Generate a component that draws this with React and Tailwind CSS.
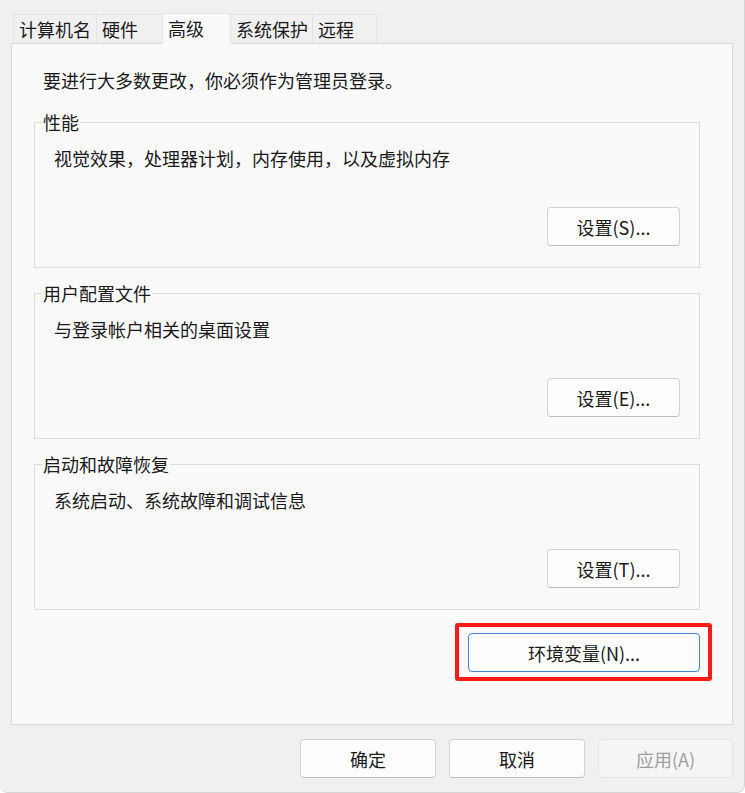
const tabs = [
  { label: "计算机名", w: "w-[84px]" },
  { label: "硬件", w: "w-[67px]" },
  { label: "高级", w: "w-[69px]", active: true },
  { label: "系统保护", w: "w-[83px]" },
  { label: "远程", w: "w-[65px]" },
];

const groups = [
  { title: "性能", desc: "视觉效果，处理器计划，内存使用，以及虚拟内存", btn: "设置(S)..." },
  { title: "用户配置文件", desc: "与登录帐户相关的桌面设置", btn: "设置(E)..." },
  { title: "启动和故障恢复", desc: "系统启动、系统故障和调试信息", btn: "设置(T)..." },
];

const Button = ({ children, className = "", disabled }) => (
  <button
    disabled={disabled}
    className={`h-[39px] rounded-[4px] border text-[18px] leading-[24px] ${
      disabled
        ? "bg-[#f5f5f5] border-[#e6e6e6] text-[#9e9e9e]"
        : "bg-[#fdfdfd] border-[#d2d2d2] border-b-[#bdbdbd] text-[#1a1a1a]"
    } ${className}`}
  >
    {children}
  </button>
);

export default function App() {
  return (
    <div
      className="w-[745px] h-[793px] bg-white"
      style={{ fontFamily: '"Noto Sans CJK SC", "Noto Sans", sans-serif' }}
    >
      <div className="w-full h-full bg-[#f0f0f0] rounded-b-[8px] border-r border-b border-[#d4d4d4] flex flex-col">
        {/* Tabs */}
        <div className="flex items-end pl-[13px] pt-[13px] h-[43px]">
          {tabs.map((t, i) => (
            <div
              key={t.label}
              className={`${t.w} ${i > 0 ? "-ml-px" : ""} border-t border-l border-r border-[#e3e3e3] pl-[5px] flex items-center text-[18px] leading-[24px] text-[#1a1a1a] ${
                t.active ? "h-[31px] -mb-px bg-[#f9f9f9] relative z-10 pb-[2px]" : "h-[29px] bg-[#f0f0f0]"
              }`}
            >
              {t.label}
            </div>
          ))}
        </div>

        {/* Panel */}
        <div className="ml-[11px] w-[722px] h-[682px] border border-[#dadada] bg-[#f9f9f9] pt-[24px] pl-[22px] flex flex-col text-[18px] leading-[24px] text-[#1a1a1a]">
          <p className="pl-[9px]">要进行大多数更改，你必须作为管理员登录。</p>

          <div className="flex flex-col gap-[13px] mt-[18px]">
            {groups.map((g) => (
              <fieldset
                key={g.title}
                className="w-[666px] h-[158px] border border-[#dcdcdc] flex flex-col pl-[19px] pr-[19px]"
              >
                <legend className="ml-[-12px] px-[1px] text-[18px] leading-[24px]">{g.title}</legend>
                <p className="mt-[12px]">{g.desc}</p>
                <div className="flex justify-end mt-[37px]">
                  <Button className="w-[133px]">{g.btn}</Button>
                </div>
              </fieldset>
            ))}
          </div>

          <div className="w-[666px] flex justify-end mt-[13px]">
            <div className="mr-[-12px] border-4 border-[#ff1a1a] rounded-[3px] pt-[6px] pb-[5px] pl-[9px] pr-[8px]">
              <button className="w-[232px] h-[39px] rounded-[4px] border border-[#3d87d3] bg-[#fdfdfd] text-[18px] leading-[24px] text-[#1a1a1a]">
                环境变量(N)...
              </button>
            </div>
          </div>
        </div>

        {/* Dialog buttons */}
        <div className="flex justify-end gap-[13px] pr-[11px] mt-[14px]">
          <Button className="w-[136px]">确定</Button>
          <Button className="w-[136px]">取消</Button>
          <Button className="w-[135px]" disabled>
            应用(A)
          </Button>
        </div>
      </div>
    </div>
  );
}
